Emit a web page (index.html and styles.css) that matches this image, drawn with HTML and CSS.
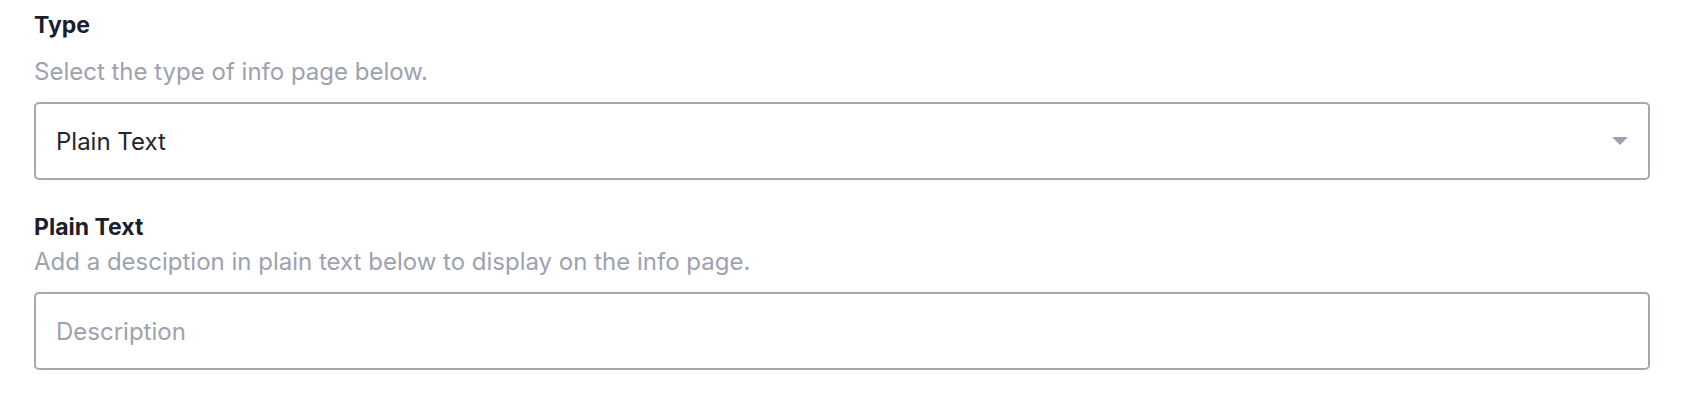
FILE: index.html
```html
<!DOCTYPE html>
<html lang="en">
<head>
  <meta charset="UTF-8" />
  <title>Info Page</title>
  <link rel="stylesheet" href="styles.css">
</head>
<body>

<form class="info-form">

  <!-- Type select -->
  <div class="field">
    <label class="field-label" for="type">Type</label>
    <p class="field-hint field-hint--spaced">Select the type of info page below.</p>
    <div class="select-wrap">
      <select id="type" class="control">
        <option>Plain Text</option>
        <option>Rich Text</option>
        <option>Link</option>
      </select>
      <span class="select-arrow"></span>
    </div>
  </div>

  <!-- Plain text description -->
  <div class="field">
    <label class="field-label" for="desc">Plain Text</label>
    <p class="field-hint">Add a desciption in plain text below to display on the info page.</p>
    <input id="desc" class="control" type="text" placeholder="Description" />
  </div>

</form>

</body>
</html>
```

FILE: styles.css
```css
body {
  margin: 0;
  background: #fff;
  font-family: 'Inter', 'Open Sans', sans-serif;
}
.info-form {
  padding: 11px 34px 0 34px;
  display: flex;
  flex-direction: column;
  gap: 33px;
}
.field {
  display: flex;
  flex-direction: column;
}
.field-label {
  font-size: 23px;
  font-weight: 700;
  color: #1c202a;
  line-height: 28px;
}
.field-hint {
  margin: 6px 0 15px 0;
  font-size: 24px;
  color: #9da2ad;
  line-height: 30px;
}
.field-hint--spaced {
  margin-top: 18px;
}
.control {
  box-sizing: border-box;
  width: 100%;
  height: 78px;
  border: 2px solid #a3a8b2;
  border-radius: 5px;
  background: #fff;
  padding: 0 20px;
  font-family: inherit;
  font-size: 24px;
  color: #23262d;
  outline: none;
}
.control::placeholder {
  color: #9da2ad;
}
.select-wrap {
  position: relative;
}
select.control {
  appearance: none;
  -webkit-appearance: none;
}
.select-arrow {
  position: absolute;
  right: 22px;
  top: 35px;
  width: 0;
  height: 0;
  border-left: 8px solid transparent;
  border-right: 8px solid transparent;
  border-top: 8px solid #9da2ad;
  pointer-events: none;
}
```
